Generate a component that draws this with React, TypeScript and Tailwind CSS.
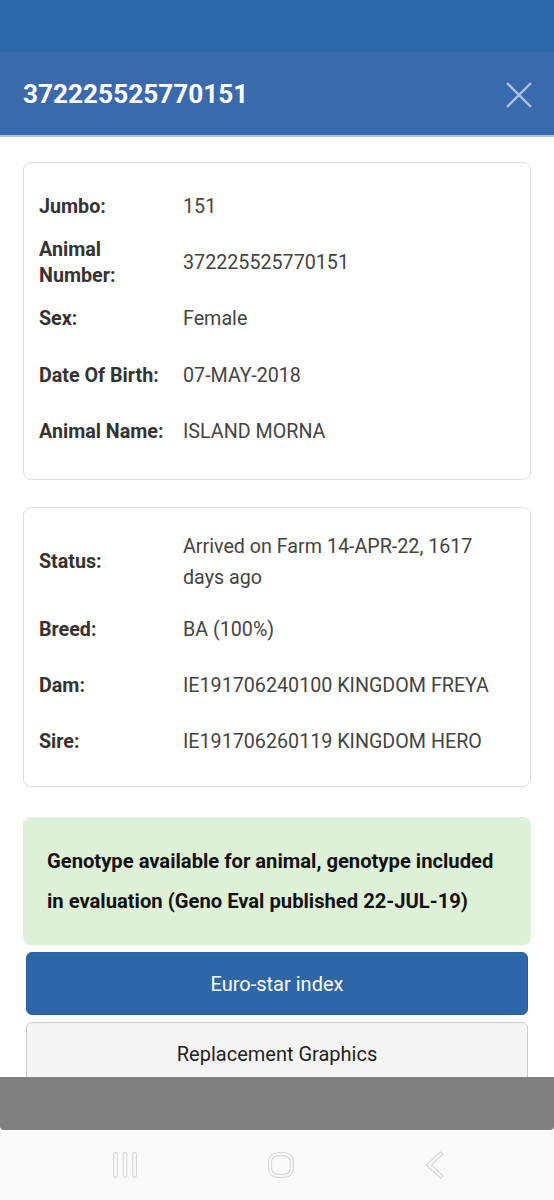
import React from "react";

const font = { fontFamily: "Roboto, 'Noto Sans', sans-serif" };

type Row = { label: string; value: string; h: string; valueClass?: string };

const animalRows: Row[] = [
  { label: "Jumbo:", value: "151", h: "h-[56px]" },
  { label: "Animal Number:", value: "372225525770151", h: "h-[55px]" },
  { label: "Sex:", value: "Female", h: "h-[57px]" },
  { label: "Date Of Birth:", value: "07-MAY-2018", h: "h-[57px]" },
  { label: "Animal Name:", value: "ISLAND MORNA", h: "h-[56px]" },
];

const statusRows: Row[] = [
  {
    label: "Status:",
    value: "Arrived on Farm 14-APR-22, 1617 days ago",
    h: "h-[80px]",
    valueClass: "leading-[31px]",
  },
  { label: "Breed:", value: "BA (100%)", h: "h-[56px]" },
  { label: "Dam:", value: "IE191706240100 KINGDOM FREYA", h: "h-[56px]" },
  { label: "Sire:", value: "IE191706260119 KINGDOM HERO", h: "h-[56px]" },
];

function InfoCard({ rows, className }: { rows: Row[]; className: string }) {
  return (
    <div
      className={`rounded-lg border border-[#dedede] bg-white pl-[15px] pr-4 ${className}`}
    >
      {rows.map((r) => (
        <div key={r.label} className={`flex items-center ${r.h}`}>
          <div className="w-[144px] shrink-0 pr-2 text-[19.7px] font-bold leading-[26px] text-[#333]">
            {r.label}
          </div>
          <div
            className={`text-[19.7px] leading-[26px] text-[#444] ${r.valueClass ?? ""}`}
          >
            {r.value}
          </div>
        </div>
      ))}
    </div>
  );
}

function NavIcons() {
  return (
    <div className="flex h-[70px] items-center justify-between bg-[#fafafa] pl-[113px] pr-[110px]">
      <svg width="24" height="26" viewBox="0 0 24 26" fill="none" stroke="#d6d6d6" strokeWidth="1.1">
        <rect x="0.6" y="0.6" width="3.6" height="24.8" rx="1.8" />
        <rect x="10.2" y="0.6" width="3.6" height="24.8" rx="1.8" />
        <rect x="19.8" y="0.6" width="3.6" height="24.8" rx="1.8" />
      </svg>
      <svg width="26" height="26" viewBox="0 0 26 26" fill="none" stroke="#d6d6d6" strokeWidth="1.1">
        <rect x="0.6" y="0.6" width="24.8" height="24.8" rx="9" />
        <rect x="3.6" y="3.6" width="18.8" height="18.8" rx="6.5" />
      </svg>
      <svg width="19" height="28" viewBox="0 0 19 28" fill="none" stroke="#d6d6d6" strokeWidth="1.1" strokeLinejoin="round">
        <path d="M15.5 0.8 L18 3.2 L6.5 14 L18 24.8 L15.5 27.2 L1.2 14 Z" />
      </svg>
    </div>
  );
}

export default function App() {
  return (
    <div className="flex h-[1200px] w-[554px] flex-col overflow-hidden bg-white" style={font}>
      <div className="h-[52px] shrink-0 bg-[#2d69a9]" />
      <header className="flex h-[85px] shrink-0 items-center justify-between border-b-2 border-[#a7c4e6] bg-[#3a6aab] pt-[3px] pl-[23px] pr-[22px]">
        <h1 className="text-[26.2px] font-bold text-white">372225525770151</h1>
        <svg width="26" height="26" viewBox="0 0 26 26" stroke="#a9c1e2" strokeWidth="2.4">
          <line x1="1" y1="1" x2="25" y2="25" />
          <line x1="25" y1="1" x2="1" y2="25" />
        </svg>
      </header>

      <main className="flex-1 overflow-hidden px-[23px] pt-[25px]">
        <InfoCard rows={animalRows} className="pt-[16px] pb-[19px]" />
        <InfoCard rows={statusRows} className="mt-[27px] pt-[14px] pb-[16px]" />

        <div className="mt-[30px] rounded-lg bg-[#dff0d8] px-[24px] py-[24px] text-[20.2px] font-bold leading-[40px] text-[#111]">
          Genotype available for animal, genotype included in evaluation
          (Geno Eval published 22-JUL-19)
        </div>

        <div className="mx-[3px] mt-[7px] flex flex-col gap-[7px]">
          <button className="h-[63px] rounded-md border border-[#2a5f9c] bg-[#2d67a8] text-[20px] text-white">
            Euro-star index
          </button>
          <button className="h-[63px] rounded-md border border-[#cccccc] bg-[#f5f5f5] text-[20px] text-[#222]">
            Replacement Graphics
          </button>
        </div>
      </main>

      <div className="h-[53px] shrink-0 rounded-b-[4px] bg-[#808080]" />
      <NavIcons />
    </div>
  );
}
